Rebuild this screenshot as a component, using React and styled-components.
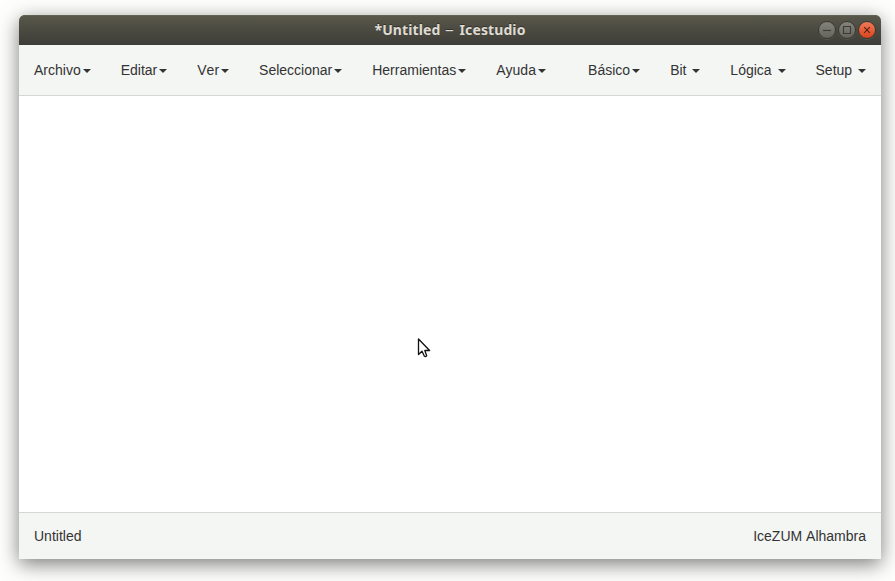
import React from "react";
import styled, { createGlobalStyle } from "styled-components";

const GlobalStyle = createGlobalStyle`
  * { box-sizing: border-box; }
  body {
    margin: 0;
    background: #fefffd;
    overflow: hidden;
    font: 14px/20px "Liberation Sans", Arial, sans-serif;
    font-kerning: none;
    color: #333;
  }
`;

const Desktop = styled.main`
  height: 581px;
  padding: 15px 14px 22px 19px;
  overflow: hidden;
`;

const Window = styled.section`
  position: relative;
  height: 544px;
  display: flex;
  flex-direction: column;
  border-radius: 6px 6px 0 0;
  background: #fefffe;
  box-shadow: 0 5px 20px rgba(0, 0, 0, 0.52);
`;

const TitleBar = styled.header`
  height: 30px;
  flex: none;
  display: grid;
  grid-template-columns: 1fr auto 1fr;
  align-items: center;
  padding: 0 5px;
  border-radius: 6px 6px 0 0;
  background: linear-gradient(#59584b, #3d3c37);
  box-shadow: inset 0 1px #626154;
`;

const Title = styled.h1`
  grid-column: 2;
  margin: 0;
  width: 151px;
  display: flex;
  justify-content: space-between;
  align-items: center;
  white-space: nowrap;
  font: 700 14px/30px "Noto Sans", sans-serif;
  letter-spacing: 0.1px;
  color: #dfdbd2;
  text-shadow: 0 -1px #33322d;
`;

const Dash = styled.span`
  font-weight: 400;
  transform: scaleX(1.25);
`;

const Controls = styled.div`
  display: flex;
  justify-content: flex-end;
  gap: 2px;
`;

const Control = styled.button`
  width: 18px;
  height: 18px;
  padding: 0;
  border: 1px solid #383732;
  border-radius: 50%;
  background: ${({ $close }) =>
    $close ? "linear-gradient(#f17a58, #d9441d)" : "linear-gradient(#85847b, #64635c)"};
  box-shadow: 0 1px rgba(255, 255, 255, 0.1);
  color: ${({ $close }) => ($close ? "#54200f" : "#3b3a35")};

  svg { display: block; }
`;

const MenuBar = styled.nav`
  height: 51px;
  flex: none;
  display: flex;
  justify-content: space-between;
  background: #f4f6f4;
  border-bottom: 1px solid #d3d7d5;
`;

const MenuGroup = styled.div`
  display: flex;
`;

const MenuItem = styled.a`
  display: block;
  padding: 15px;
  white-space: pre;

  &::after {
    content: "";
    display: inline-block;
    margin-left: 2px;
    vertical-align: middle;
    border-top: 4px solid #333;
    border-left: 4px solid transparent;
    border-right: 4px solid transparent;
  }
`;

const Canvas = styled.div`
  flex: 1;
`;

const StatusBar = styled.footer`
  height: 47px;
  flex: none;
  display: flex;
  justify-content: space-between;
  padding: 13px 15px;
  background: #f4f6f4;
  border-top: 1px solid #d3d7d5;
`;

const Pointer = styled.svg`
  position: absolute;
  left: 398px;
  top: 322px;
`;

const mainMenu = ["Archivo", "Editar", "Ver", "Seleccionar", "Herramientas", "Ayuda"];
const blockMenu = ["Básico", "Bit ", "Lógica ", "Setup "];

const controls = [
  { name: "Minimizar", d: "M4 8.5H12" },
  { name: "Maximizar", d: "M4.5 4.5H11.5V11.5H4.5Z" },
  { name: "Cerrar", d: "M5.2 5.2L10.8 10.8M10.8 5.2L5.2 10.8", close: true },
];

export default function App() {
  return (
    <Desktop>
      <GlobalStyle />
      <Window>
        <TitleBar>
          <Title>
            <span>*Untitled</span>
            <Dash>–</Dash>
            <span>Icestudio</span>
          </Title>
          <Controls>
            {controls.map(({ name, d, close }) => (
              <Control key={name} aria-label={name} $close={close}>
                <svg width="16" height="16" fill="none" stroke="currentColor" strokeWidth="1.1">
                  <path d={d} />
                </svg>
              </Control>
            ))}
          </Controls>
        </TitleBar>
        <MenuBar>
          <MenuGroup>
            {mainMenu.map((label) => <MenuItem key={label}>{label}</MenuItem>)}
          </MenuGroup>
          <MenuGroup>
            {blockMenu.map((label) => <MenuItem key={label}>{label}</MenuItem>)}
          </MenuGroup>
        </MenuBar>
        <Canvas />
        <StatusBar>
          <span>Untitled</span>
          <span>IceZUM Alhambra</span>
        </StatusBar>
        <Pointer width="16" height="23" viewBox="0 0 16 23">
          <path
            d="M1.5 2V17.5L5 14.2L7.4 19.3Q8.5 20 9.7 18.7L7.8 13.5H12.6Z"
            fill="#fff"
            stroke="#111"
            strokeWidth="1.3"
            strokeLinejoin="round"
          />
        </Pointer>
      </Window>
    </Desktop>
  );
}
